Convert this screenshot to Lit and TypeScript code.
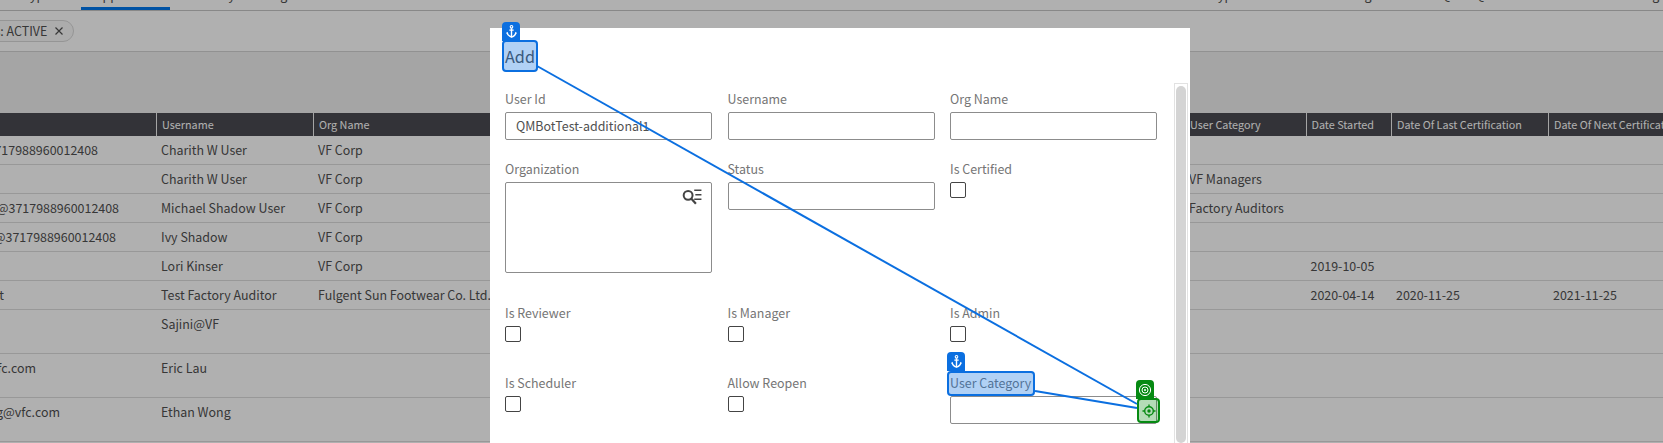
import { LitElement, html, css } from "lit";
import { customElement } from "lit/decorators.js";

const TABS = [
  { label: "Type", width: 81, pad: 23 },
  { label: "Approvers", width: 89, pad: 14, active: true },
  { label: "Activity Tracking", width: 320, pad: 22 },
  { label: "", width: 700, pad: 0 },
  { label: "Type", width: 110, pad: 21 },
  { label: "Tracking", width: 120, pad: 22 },
  { label: "QA", width: 35, pad: 21 },
  { label: "QC", width: 60, pad: 20 },
  { label: "Training", width: 148, pad: 97 },
];

const COLUMNS = "156px 157px 871px 121.5px 85.5px 157px 1fr";
const HEAD = ["", "Username", "Org Name", "User Category", "Date Started", "Date Of Last Certification", "Date Of Next Certification"];
const ROWS = [
  { h: 29, id: "charith@3717988960012408", end: 98, c: ["Charith W User", "VF Corp", "", "", "", ""] },
  { h: 29, id: "", end: 0, c: ["Charith W User", "VF Corp", "VF Managers", "", "", ""] },
  { h: 29, id: "michael@3717988960012408", end: 119, c: ["Michael Shadow User", "VF Corp", "Factory Auditors", "", "", ""] },
  { h: 29, id: "ivy@3717988960012408", end: 116, c: ["Ivy Shadow", "VF Corp", "", "", "", ""] },
  { h: 29, id: "", end: 0, c: ["Lori Kinser", "VF Corp", "", "2019-10-05", "", ""] },
  { h: 29, id: "test", end: 4, c: ["Test Factory Auditor", "Fulgent Sun Footwear Co. Ltd.", "", "2020-04-14", "2020-11-25", "2021-11-25"] },
  { h: 44, id: "", end: 0, c: ["Sajini@VF", "", "", "", "", ""] },
  { h: 44, id: "eric_lau@vfc.com", end: 36, c: ["Eric Lau", "", "", "", "", ""] },
  { h: 44, id: "ethan_wong@vfc.com", end: 60, c: ["Ethan Wong", "", "", "", "", ""] },
];

const anchorIcon = html`<svg class="anchor" viewBox="0 0 10 12" width="11" height="13" fill="none" stroke="#fff">
  <circle cx="5" cy="1.7" r="1.2" stroke-width="1"></circle>
  <path d="M5 3v8.2M3 4.7h4" stroke-width="1.3"></path>
  <path d="M1 7C1.2 9.6 3.4 10.6 5 11.2 6.6 10.6 8.8 9.6 9 7" stroke-width="1.3"></path>
  <path d="M0 7.8 1 6.2 2 7.8zM8 7.8 9 6.2 10 7.8z" fill="#fff" stroke="none"></path>
</svg>`;

@customElement("app-root")
export class AppRoot extends LitElement {
  static styles = css`
    :host {
      display: block;
      position: relative;
      width: 1663px;
      height: 443px;
      overflow: hidden;
      background: #fff;
      font-family: "Noto Sans CJK JP", "Noto Sans", sans-serif;
      font-size: 12.45px;
      color: #505050;
    }
    .tabs { display: flex; height: 10px; border-bottom: 1px solid #c6c6c6; overflow: hidden; }
    .tab { box-sizing: border-box; flex: none; height: 10px; display: flex; align-items: flex-end; white-space: nowrap; line-height: 14px; padding-bottom: 5px; border-bottom: 3px solid transparent; }
    .tab.active { border-bottom-color: #0077ee; }
    .filters { box-sizing: border-box; height: 41px; border-bottom: 1px solid #d2d2d2; padding-top: 9px; display: flex; background: #fff; }
    .chip { display: flex; align-items: center; gap: 7px; height: 22px; box-sizing: border-box; margin-left: -49px; padding: 0 9px 0 12px; border: 1px solid #d8d8d8; border-radius: 11px; background: #fafafa; white-space: nowrap; line-height: 18px; }
    .chip svg { display: block; }
    .band { height: 61px; background: #efefef; }
    .head, .row { display: grid; grid-template-columns: ${css([COLUMNS] as any)}; }
    .head { height: 23px; background: #4a4a51; color: #fff; font-size: 10.8px; line-height: 23px; }
    .head div { box-sizing: border-box; padding-left: 5px; border-left: 1px solid #f0f0f0; white-space: nowrap; overflow: hidden; }
    .head div:first-child { border-left: 0; }
    .row { box-sizing: border-box; border-bottom: 1px solid #dcdcdc; line-height: 18px; }
    .row > div { padding: 5px 0 0 5.5px; white-space: nowrap; min-width: 0; }
    .row > .first { display: flex; justify-content: flex-end; padding-left: 0; }
    .row > .wrap { padding-left: 5px; }
    .dim { position: absolute; inset: 0; background: rgba(0, 0, 0, 0.31); }
    .modal { position: absolute; left: 490px; top: 28px; width: 700px; height: 415px; box-sizing: border-box; background: #fff; padding: 0 15px; overflow: hidden; }
    .title { height: 62px; box-sizing: border-box; padding-top: 15px; font-size: 16.2px; line-height: 26px; color: #505050; }
    .form { display: grid; grid-template-columns: repeat(3, 207px); column-gap: 15.5px; row-gap: 20px; grid-template-rows: 50px 124px 50px 50px; }
    .field label { display: block; height: 22px; line-height: 18px; color: #757575; }
    .input { box-sizing: border-box; height: 28px; border: 1px solid #8c8c8c; border-radius: 2px; padding: 0 10px; line-height: 26px; color: #505050; white-space: nowrap; }
    .area { position: relative; height: 91px; }
    .area svg { position: absolute; right: 9px; top: 5px; }
    .check { box-sizing: border-box; width: 16px; height: 16px; border: 1px solid #444; border-radius: 2px; }
    .track { position: absolute; left: 684px; top: 55px; width: 14px; height: 360px; box-sizing: border-box; border: 1px solid #e2e2e2; border-bottom: 0; padding: 2px 1px 0; }
    .thumb { height: 357px; background: #d4d4d4; border-radius: 5px; }
    .mark { position: absolute; box-sizing: border-box; border: 2px solid #0b6fe0; border-radius: 4px; background: rgba(11, 111, 224, 0.32); }
    .tag { position: absolute; display: flex; align-items: center; justify-content: center; box-sizing: border-box; background: #0b6fe0; border-radius: 4px 4px 0 0; }
    .tag.blue { width: 18px; height: 19px; }
    .target { position: absolute; left: 1137px; top: 398px; width: 23px; height: 25px; box-sizing: border-box; border: 2px solid #068a12; border-radius: 4px; background: rgba(6, 138, 18, 0.3); display: flex; align-items: center; justify-content: center; }
    .target-tag { position: absolute; left: 1136px; top: 380px; width: 18px; height: 19px; background: #068a12; border-radius: 4px 4px 0 0; display: flex; align-items: center; justify-content: center; }
    .lines { position: absolute; left: 0; top: 0; }
    .m-add { left: 502px; top: 40px; width: 36px; height: 32px; }
    .t-add { left: 502px; top: 22px; }
    .m-cat { left: 947px; top: 371px; width: 88px; height: 25px; }
    .t-cat { left: 947px; top: 352px; }
  `;

  private field(label: string, control: unknown) {
    return html`<div class="field"><label>${label}</label>${control}</div>`;
  }

  render() {
    const input = (v = "") => html`<div class="input">${v}</div>`;
    const check = html`<div class="check"></div>`;
    return html`
      <div class="tabs">
        ${TABS.map(
          (t) => html`<div class="tab ${t.active ? "active" : ""}" style="width:${t.width}px;padding-left:${t.pad}px">${t.label}</div>`
        )}
      </div>
      <div class="filters">
        <div class="chip">
          <span>Status: ACTIVE</span>
          <svg viewBox="0 0 10 10" width="10" height="10" fill="none" stroke="#505050" stroke-width="1.2"><path d="M1.5 1.5l7 7M8.5 1.5l-7 7"></path></svg>
        </div>
      </div>
      <div class="band"></div>
      <div class="head">${HEAD.map((h) => html`<div>${h}</div>`)}</div>
      ${ROWS.map(
        (r) => html`<div class="row" style="height:${r.h}px">
          <div class="first" style="padding-right:${156 - r.end}px">${r.id}</div>
          ${r.c.map((c) => html`<div class="wrap">${c}</div>`)}
        </div>`
      )}
      <div class="dim"></div>
      <div class="modal">
        <div class="title">Add</div>
        <div class="form">
          ${this.field("User Id", input("QMBotTest-additional1"))}
          ${this.field("Username", input())}
          ${this.field("Org Name", input())}
          ${this.field(
            "Organization",
            html`<div class="input area">
              <svg viewBox="0 0 18 16" width="20" height="18" fill="none" stroke="#444">
                <circle cx="5.5" cy="6.5" r="4" stroke-width="1.8"></circle>
                <path d="M8.5 9.5l4 4.5" stroke-width="2"></path>
                <path d="M11 2h6.5M12 6h5.5M11 10h6.5" stroke-width="1.4"></path>
              </svg>
            </div>`
          )}
          ${this.field("Status", input())}
          ${this.field("Is Certified", check)}
          ${this.field("Is Reviewer", check)}
          ${this.field("Is Manager", check)}
          ${this.field("Is Admin", check)}
          ${this.field("Is Scheduler", check)}
          ${this.field("Allow Reopen", check)}
          ${this.field("User Category", input())}
        </div>
        <div class="track"><div class="thumb"></div></div>
      </div>
      <div class="mark m-add"></div>
      <div class="tag blue t-add">${anchorIcon}</div>
      <div class="mark m-cat"></div>
      <div class="tag blue t-cat">${anchorIcon}</div>
      <div class="target-tag">
        <svg viewBox="0 0 14 14" width="14" height="14" fill="none" stroke="#fff">
          <circle cx="7" cy="7" r="5.6" stroke-width="1"></circle>
          <circle cx="7" cy="7" r="3" stroke-width="1"></circle>
          <circle cx="7" cy="7" r="1" fill="#fff" stroke="none"></circle>
        </svg>
      </div>
      <div class="target">
        <svg viewBox="0 0 14 14" width="14" height="14" fill="none" stroke="#068a12">
          <circle cx="7" cy="7" r="4.3" stroke-width="1.4"></circle>
          <circle cx="7" cy="7" r="1.7" fill="#068a12" stroke="none"></circle>
          <path d="M7 .5v2.2M7 11.3v2.2M.5 7h2.2M11.3 7h2.2" stroke-width="1.4"></path>
        </svg>
      </div>
      <svg class="lines" width="1663" height="443" fill="none" stroke="#0b6fe0" stroke-width="2">
        <path d="M537 66L1137 404"></path>
        <path d="M1035 391L1137 408"></path>
      </svg>
    `;
  }
}
